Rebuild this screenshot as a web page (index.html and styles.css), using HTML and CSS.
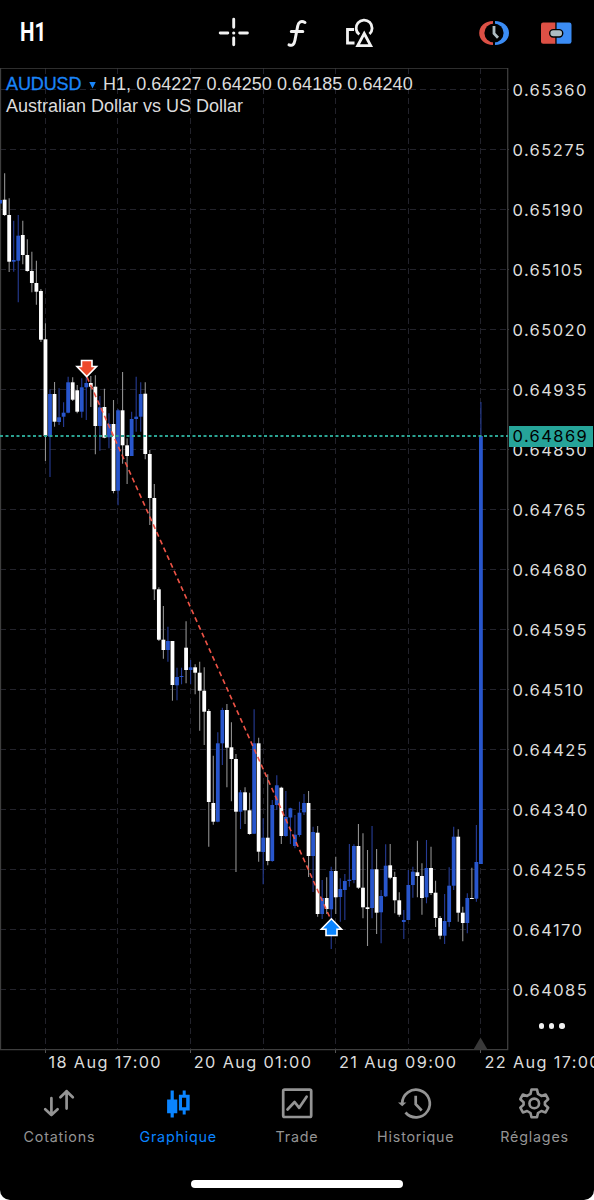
FILE: index.html
```html
<!DOCTYPE html>
<html lang="fr">
<head>
	<meta charset="UTF-8">
	<title>AUDUSD H1</title>
	<link rel="stylesheet" href="styles.css">
</head>
<body>
	<div class="app">
		<header class="toolbar">
			<div class="timeframe"><span>H1</span></div>
			<svg class="tool" viewBox="0 0 32 36" fill="none" stroke="#f2f2f2" stroke-width="2.9" stroke-linecap="round">
				<path d="M15.7 4.3v8M15.7 23v6.800M2.2 18h7.6M21.7 18h7.7"/>
				<path d="M15.7 18h.01" stroke-width="3.2"/>
			</svg>
			<svg class="tool" viewBox="0 0 32 36" fill="none" stroke="#f2f2f2" stroke-width="3" stroke-linecap="round">
				<path d="M24 7.5C20 5.2 17.4 7.5 16.7 11L14 25C13.200 29.500 11.500 31.400 8 29.800M10.300 16.500H21.800"/>
			</svg>
			<svg class="tool" viewBox="0 0 32 36" fill="none" stroke="#f2f2f2" stroke-width="2.8">
				<path d="M10 14.500H3.500V28H10.500"/>
				<path d="M15.300 19.500A8 8 0 1 1 25.500 19"/>
				<path d="M20.200 18.500L26.700 30.600H13.700Z"/>
			</svg>
			<svg class="tool tool-history" viewBox="0 0 32 36">
				<path d="M15 6C7 6.300 1.200 11 1.200 18S7 29.700 15 30Z" fill="#dc5045"/>
				<path d="M17 6C25 6.300 31 11 31 18S25 29.700 17 30Z" fill="#3b8cf4"/>
				<circle cx="16" cy="18" r="9.600" fill="#000"/>
				<path d="M16 11v7.500l4 4.200" fill="none" stroke="#aebcc2" stroke-width="2.800"/>
			</svg>
			<svg class="tool tool-trade" viewBox="0 0 32 36">
				<path d="M15.300 7.500H3.200Q1 7.500 1 9.700V26.600Q1 28.800 3.200 28.800H15.300Z" fill="#dc5045"/>
				<path d="M16.600 7.500H29.300Q31.500 7.500 31.500 9.700V26.600Q31.500 28.800 29.300 28.800H16.600Z" fill="#3b8cf4"/>
				<rect x="9.700" y="14.600" width="13" height="7.400" rx="3.500" fill="#aebcc2" stroke="#000" stroke-width="1.400"/>
			</svg>
		</header>

		<main class="chart">
			<div class="plot">
				<svg id="plot" width="509" height="988" viewBox="0 68 509 988"></svg>
				<div class="info">
					<p class="quote"><span class="symbol">AUDUSD</span><i class="caret"></i><span class="ohlc">H1, 0.64227 0.64250 0.64185 0.64240</span></p>
					<p class="name">Australian Dollar vs US Dollar</p>
				</div>
			</div>
			<div class="prices">
				<span>0.65360</span>
				<span>0.65275</span>
				<span>0.65190</span>
				<span>0.65105</span>
				<span>0.65020</span>
				<span>0.64935</span>
				<span>0.64850</span>
				<span>0.64765</span>
				<span>0.64680</span>
				<span>0.64595</span>
				<span>0.64510</span>
				<span>0.64425</span>
				<span>0.64340</span>
				<span>0.64255</span>
				<span>0.64170</span>
				<span>0.64085</span>
				<b class="current">0.64869</b>
				<div class="more"><i></i><i></i><i></i></div>
			</div>
		</main>

		<div class="times">
			<span>18 Aug 17:00</span>
			<span>20 Aug 01:00</span>
			<span>21 Aug 09:00</span>
			<span>22 Aug 17:00</span>
		</div>

		<nav class="tabs">
			<a class="tab">
				<svg viewBox="0 0 36 36" fill="none" stroke="currentColor" stroke-width="2.700" stroke-linecap="round" stroke-linejoin="round">
					<path d="M10.400 13.200V30M4.200 24.200L10.400 30L16.600 24.200M25.600 23.600V6.200M19.400 12.200L25.600 6.200L31.800 12.200"/>
				</svg>
				<span>Cotations</span>
			</a>
			<a class="tab active">
				<svg viewBox="0 0 36 36" fill="currentColor">
					<path d="M10.600 5.500h3.200v9h3.500v13.800h-3.500v4.300h-3.200v-4.300H7.100V14.500h3.500z"/>
					<path fill-rule="evenodd" d="M22.700 5.500h3v4.200h4v15.800h-4v4.100h-3v-4.100h-3.800V9.700h3.800zM22 12.700v9.600h4.200v-9.600z"/>
				</svg>
				<span>Graphique</span>
			</a>
			<a class="tab">
				<svg viewBox="0 0 36 36" fill="none" stroke="currentColor" stroke-width="2.700" stroke-linejoin="round">
					<rect x="4.200" y="4.600" width="28" height="27.400" rx="1.500"/>
					<path d="M8.500 24.500L15.600 17L20.200 22.800L27.600 11.700" stroke-linecap="round"/>
				</svg>
				<span>Trade</span>
			</a>
			<a class="tab">
				<svg viewBox="0 0 36 36" fill="none" stroke="currentColor" stroke-width="2.700">
					<path d="M4.200 18.300A13.800 13.800 0 1 1 7.500 27.500"/>
					<path d="M0 17.500h8.400L4.200 21.300z" fill="currentColor" stroke="none"/>
					<path d="M17.700 10.800v8.400l6 6.300"/>
				</svg>
				<span>Historique</span>
			</a>
			<a class="tab">
				<svg viewBox="0 0 36 36" fill="none" stroke="currentColor" stroke-width="2.600" stroke-linejoin="round">
					<path d="M14.500 4.500H20L21 8.900L24.400 10.900L28.600 9.500L31.200 14.200L27.900 17.200V19.800L31.200 22.700L28.600 27.400L24.400 26L21 28L20 32.300H14.500L13.500 28L10.100 26L5.900 27.400L3.300 22.700L6.600 19.800V17.200L3.300 14.200L5.900 9.500L10.100 10.900L13.500 8.900Z"/>
					<circle cx="17.250" cy="18.400" r="4.800"/>
				</svg>
				<span>Réglages</span>
			</a>
		</nav>
		<div class="home"></div>
	</div>
	<script src="chart.js"></script>
</body>
</html>
```
FILE: styles.css
```css
* {
	box-sizing: border-box;
}

body {
	margin: 0;
	background: #fff;
	font-family: Inter, "Liberation Sans", sans-serif;
}

p {
	margin: 0;
}

.app {
	width: 594px;
	height: 1200px;
	background: #000;
	color: #dcdcdc;
	border-radius: 0 0 10px 10px;
	overflow: hidden;
	display: flex;
	flex-direction: column;
}

/* top bar */
.toolbar {
	height: 68px;
	flex: none;
	display: flex;
	align-items: center;
	padding: 0 22px 2px 20px;
	gap: 31px;
}

.timeframe {
	width: 167px;
	font: bold 25px/30px Roboto, sans-serif;
	color: #fff;
}

.timeframe span {
	display: inline-block;
	transform: scaleX(.82);
	transform-origin: left;
}

.tool {
	width: 32px;
	height: 36px;
	flex: none;
}

.tool-history {
	margin-left: 71px;
}

.tool-trade {
	margin-left: -1px;
}

/* chart */
.chart {
	height: 982px;
	flex: none;
	display: flex;
}

.plot {
	width: 509px;
	flex: none;
	position: relative;
}

.plot svg {
	display: block;
}

.info {
	position: absolute;
	left: 6px;
	top: 5px;
	font: 18px/22px "Liberation Sans", sans-serif;
	white-space: nowrap;
}

.quote {
	display: flex;
	align-items: center;
}

.symbol {
	width: 76px;
	color: #1a85f8;
	letter-spacing: -.1px;
	-webkit-text-stroke: .3px #1a85f8;
}

.caret {
	width: 7px;
	height: 7px;
	margin: 2px 7px 0 7px;
	background: #1a85f8;
	clip-path: polygon(0 0, 100% 0, 50% 100%);
}

.ohlc {
	letter-spacing: .04px;
}

.prices {
	flex: 1;
	position: relative;
	padding: 6.5px 0 0 3.5px;
	font-size: 16.5px;
	letter-spacing: 1.4px;
}

.prices span {
	display: block;
	height: 60px;
	line-height: 30px;
}

.current {
	position: absolute;
	left: 0;
	top: 358px;
	width: 83.500px;
	height: 21px;
	padding-left: 3.5px;
	background: #26a499;
	color: #000;
	font-weight: normal;
	line-height: 21px;
}

.more {
	position: absolute;
	left: 29.500px;
	bottom: 21.500px;
	display: flex;
	gap: 5px;
}

.more i {
	width: 5.400px;
	height: 5.400px;
	border-radius: 50%;
	background: #f0f0f0;
}

/* time scale */
.times {
	flex: none;
	height: 30px;
	display: flex;
	padding-left: 48.500px;
	font-size: 16.300px;
	line-height: 25px;
	letter-spacing: 1.350px;
	white-space: nowrap;
}

.times span {
	flex: none;
	width: 145.300px;
}

/* bottom navigation */
.tabs {
	flex: none;
	display: grid;
	grid-template-columns: repeat(5, 1fr);
	height: 80px;
	padding-top: 5px;
}

.tab {
	display: flex;
	flex-direction: column;
	align-items: center;
	gap: 7px;
	color: #949494;
	font-size: 14.300px;
	line-height: 18px;
	letter-spacing: .8px;
}

.tab svg {
	width: 36px;
	height: 36px;
}

.active {
	color: #0a84ff;
}

.home {
	width: 212px;
	height: 8px;
	flex: none;
	margin: 20px auto 0;
	border-radius: 4px;
	background: #fff;
}
```
FILE: chart.js
```js
// high, body top, body bottom, low, 1 = bull
var candles = [
	[200,200,203.5,203.5,1],[173.3,199.7,215,216,0],[198.3,215,261.7,272,0],[220.7,260,261.7,271.7,1],
	[215,235.7,260.7,302.3,1],[220.7,235,255,264.3,0],[239.3,255,271,271.7,0],[251.7,271,283,292.3,0],
	[260.7,283,291.7,304.7,0],[289,291,339.7,342,0],[323.3,339.3,436,461,0],[389.3,394,436.7,477,1],
	[382,394,421.7,426.7,0],[388.3,417.3,422,425,1],[402.3,412.7,416.7,427,1],[376.7,382.3,412.7,413.3,1],
	[377.3,382.3,399.7,401,0],[385,390.3,411.7,413.3,0],[378.3,387.3,411.7,417.7,1],[376.7,383,387.3,420,1],
	[376,383,386.7,407,0],[375.3,386.7,426,454.3,0],[396,407.3,426,450.7,1],[388.7,407,437.7,438.3,0],
	[413.3,424,437.3,448.3,1],[400,424,491,493.3,0],[409,410.3,490.7,505.3,1],[372,410.3,445.3,463.7,0],
	[438.3,445.3,456,484,0],[411.7,419,456,456,1],[376.7,416.7,419,431.7,1],[382.3,394,416.7,431.7,1],
	[382.3,393.7,454,459.3,0],[450,454,498,525,0],[484,498,589.3,600,0],[587.3,589.3,639.7,641,0],
	[606,639.7,650,658.7,0],[626.7,641,650,661.7,1],[641,641,685,700.7,0],[667.7,677,685.3,700.3,1],
	[667.7,676,677,684.3,1],[621.3,647.7,670,683.3,0],[660,667.3,670,684.3,1],[664.3,667.3,672.7,694.3,0],
	[661.7,672.7,690.7,730.7,0],[667.3,690.7,711.7,745,0],[709,711,802,846.7,0],[755.7,803,821.7,824.7,0],
	[732.3,743.3,821.7,822.3,1],[707.7,710,743.3,765,1],[704,710,747.7,787.3,0],[722.3,747.3,759,801.3,0],
	[754,759,811.7,872,0],[790,792.3,811.7,829,1],[787.3,792.3,810.3,824,0],[792.7,810.3,834,834.7,0],
	[709.3,743.3,833.7,834,1],[737.7,743.3,851.7,861.7,0],[818.3,837.7,852,884.3,1],[774.3,837.7,861,865.3,0],
	[800,805,861,861.7,1],[775.3,785.3,805,810,1],[786.7,787.7,836,844,0],[791,817,836,836.7,1],
	[807.7,808.3,817.5,844,1],[815,834.7,846,848.3,1],[801.7,812.7,835,836.7,1],[794,803,812.3,815,1],
	[791,803,856,877,0],[826.7,832,856,892,1],[826,832.7,914,916.7,0],[880,898,914,919,1],
	[877.3,898,909,914,0],[866.7,871,909.3,949,1],[856.7,871,897.3,914,0],[878.3,889,897,921.7,1],
	[874,881,890,920,1],[844,879.7,881,886.7,1],[844.3,846,880,883.3,1],[824,846,887.7,889,0],
	[833.3,887.7,907.3,918.3,0],[850,907.3,909,946,0],[826,869.3,908,918.3,1],[849,869.3,912.7,934,0],
	[890,896,912.3,943.3,1],[844.3,865.7,896.3,897,1],[844,865.3,877.7,879.3,0],[871.7,877,900.3,913.3,0],
	[892.3,900.3,914.7,916.7,0],[910,920,922,939,1],[870,885,920,920,1],[866.7,871.7,885,897.7,1],
	[840.7,872.3,876,897.3,0],[863.3,876,898,914.7,0],[840,868,897.3,903.3,1],[846.7,868,893,895,0],
	[880.7,892.7,918,927,0],[916,918,935.7,939.3,0],[894,921,935.7,944,1],[867.3,885.7,922,926.7,1],
	[826.7,836.7,885.7,890,1],[829.3,836.7,912.7,921.7,0],[906.7,912.7,923,941.3,0],[893.3,898,923,933.3,1],
	[867.7,898,898.7,898.7,0],[825,862,898.7,901.7,1],[402,436,864,864,1]
];
var step = 4.536;
var out = '';

function line(x1, y1, x2, y2, color, extra) {
	out += '<line x1="' + x1 + '" y1="' + y1 + '" x2="' + x2 + '" y2="' + y2 + '" stroke="' + color + '" ' + (extra || '') + '/>';
}

// grid
for (var i = 0; i < 16; i++) {
	line(0, 89.5 + i * 60, 508, 89.5 + i * 60, '#22222b', 'stroke-dasharray="6 4"');
	line(508, 89.5 + i * 60, 511, 89.5 + i * 60, '#3c3c3c');
}
for (i = 0; i < 7; i++) {
	var gx = Math.floor((10 + i * 16) * step) + .5;
	line(gx, 68, gx, 1050, '#22222b', 'stroke-dasharray="6 4"');
	if (i % 2 == 0) line(gx, 1050, gx, 1053, '#555');
}

// frame
out += '<path d="M.5 68V1050M0 68H507.700V1049.700H0" fill="none" stroke="#3e3e3e" stroke-width="1.300"/>';
out += '<path d="M473.500 1049.500L480.500 1037.500L487.500 1049.500Z" fill="#393939"/>';

for (i = 0; i < candles.length; i++) {
	var c = candles[i];
	var x = i * step + .1;
	line(x, c[0], x, c[3], c[4] ? '#263c96' : '#909090', 'stroke-width="1.100"');
	out += '<rect x="' + (x - 1.9) + '" y="' + c[1] + '" width="3.800" height="' + Math.max(c[2] - c[1], 1) + '" fill="' + (c[4] ? '#2856cc' : '#fff') + '"/>';
}

// current price and the closed deal
line(0, 436, 508, 436, '#2ba392', 'stroke-width="1.900" stroke-dasharray="3 2.500"');
line(87, 377, 331, 920, '#ee5346', 'stroke-width="1.600" stroke-dasharray="5 3.500"');
out += '<path d="M81.500 360.500H92V366.500H96.500L86.700 376.500L77 366.500H81.500Z" fill="#ee4a2c" stroke="#fff" stroke-width="1.600"/>';
out += '<path d="M326 935.500H337V929.300H341.500L331.400 918.800L321.300 929.300H326Z" fill="#0a84ff" stroke="#fff" stroke-width="1.600"/>';

document.getElementById('plot').innerHTML = out;
```
